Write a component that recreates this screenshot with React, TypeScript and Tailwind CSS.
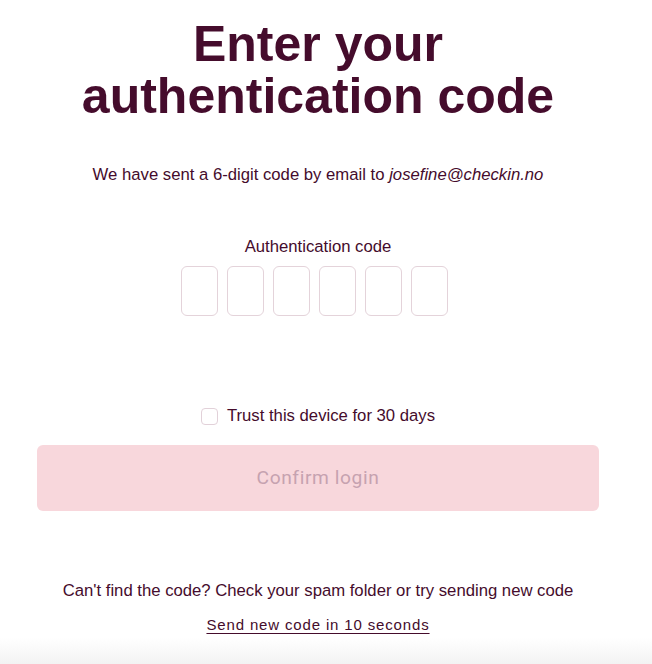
const INK = "text-[#450c2c]";

export default function App() {
  const digits = [0, 1, 2, 3, 4, 5];
  return (
    <div className="relative min-h-[664px] w-[652px] bg-white font-['Liberation_Sans',Arial,sans-serif]">
      <div className={`flex w-[636px] flex-col items-center pt-[18px] ${INK}`}>
        <h1 className="text-center text-[50px] font-bold leading-[52px]">
          Enter your
          <br />
          authentication code
        </h1>

        <p className="mt-[42px] text-[16.7px] leading-[22px]">
          We have sent a 6-digit code by email to <em>josefine@checkin.no</em>
        </p>

        <label className="mt-[50px] text-[16.7px] leading-[22px]">
          Authentication code
        </label>
        <div className="mr-[8px] mt-[8px] flex gap-[9px]">
          {digits.map((d) => (
            <input
              key={d}
              type="text"
              maxLength={1}
              className="h-[50px] w-[37px] rounded-[6px] border border-[#e4d3da] bg-white text-center text-xl outline-none"
            />
          ))}
        </div>

        <label className="mt-[89px] flex items-center gap-[9px] text-[16.7px] leading-[22px]">
          <span className="h-[17px] w-[17px] rounded-[4px] border border-[#e2d1d9] bg-white" />
          Trust this device for 30 days
        </label>

        <button
          type="button"
          disabled
          className="mt-[18px] h-[66px] w-[562px] rounded-[6px] bg-[#f8d7dc] font-['Roboto',sans-serif] text-[19.2px] tracking-[0.6px] text-[#c6a2b0]"
        >
          Confirm login
        </button>

        <p className="mt-[69px] text-[16.7px] leading-[22px]">
          Can't find the code? Check your spam folder or try sending new code
        </p>
        <a
          href="#"
          className="mt-[13px] text-[15px] leading-[20px] tracking-[0.85px] underline underline-offset-[3px]"
        >
          Send new code in 10 seconds
        </a>
      </div>
      <div className="absolute bottom-0 left-0 h-[26px] w-full bg-gradient-to-b from-white to-[#f3f3f3]" />
    </div>
  );
}
